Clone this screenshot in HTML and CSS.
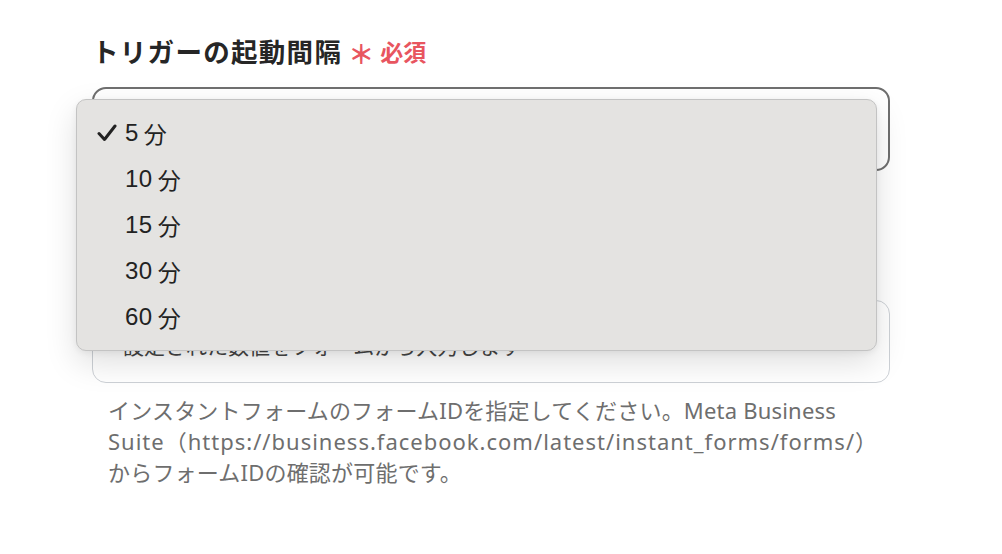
FILE: index.html
```html
<!DOCTYPE html>
<html lang="ja">
<head>
<meta charset="utf-8">
<link rel="stylesheet" href="styles.css">
</head>
<body>
<div class="page">
  <div class="label">トリガーの起動間隔<span class="req"><span class="ast">＊</span>必須</span></div>
  <div class="field">
    <div class="select"></div>
    <ul class="menu">
      <li class="item selected">
        <svg class="check" viewBox="0 0 20 18" width="20" height="18"><path d="M2 9.5 L7.5 15.5 L18 2" fill="none" stroke="#222" stroke-width="3" stroke-linecap="round" stroke-linejoin="round"/></svg>
        5<span class="unit">分</span>
      </li>
      <li class="item">10<span class="unit">分</span></li>
      <li class="item">15<span class="unit">分</span></li>
      <li class="item">30<span class="unit">分</span></li>
      <li class="item">60<span class="unit">分</span></li>
    </ul>
  </div>
  <div class="input"><span class="placeholder">設定された数値をフォームから入力します</span></div>
  <p class="help">インスタントフォームのフォームIDを指定してください。Meta Business<br><span class="wide">Suite（https://business.facebook.com/latest/instant_forms/forms/）</span><br>からフォームIDの確認が可能です。</p>
</div>
</body>
</html>
```

FILE: styles.css
```css
html, body {
  margin: 0;
  padding: 0;
  background: #ffffff;
}

body {
  font-family: "Liberation Sans", "Noto Sans CJK JP", sans-serif;
  color: #222222;
}

.page {
  width: 798px;
  padding: 35px 0 0 92px;
}

.label {
  font-family: "Noto Sans CJK JP", sans-serif;
  font-size: 26.5px;
  font-weight: 700;
  line-height: 32px;
  letter-spacing: 1.3px;
  color: #262626;
  margin-bottom: 20px;
  display: flex;
  align-items: center;
}

.req {
  font-size: 23px;
  font-weight: 700;
  color: #e8555f;
  margin-left: 6px;
  letter-spacing: 0;
  display: flex;
  align-items: center;
}

.ast {
  font-size: 26px;
  margin-right: 6px;
  position: relative;
  top: 2px;
}

.field {
  position: relative;
}

.select {
  box-sizing: border-box;
  height: 84px;
  border: 2px solid #6f6f6f;
  border-radius: 14px;
  background: #ffffff;
}

.menu {
  position: absolute;
  left: -16px;
  top: 12px;
  width: 801px;
  box-sizing: border-box;
  margin: 0;
  padding: 10px 0;
  list-style: none;
  background: #e4e3e1;
  border: 1px solid #c3c3c3;
  border-radius: 10px;
  box-shadow: 0 12px 32px rgba(0, 0, 0, 0.13), 0 2px 6px rgba(0, 0, 0, 0.06);
  z-index: 10;
}

.item {
  position: relative;
  height: 46px;
  display: flex;
  align-items: center;
  padding-left: 48px;
  font-family: "Liberation Sans", "Noto Sans CJK JP", sans-serif;
  font-size: 24px;
  line-height: 24px;
  letter-spacing: 0.5px;
  color: #222222;
}

.unit {
  font-family: "Noto Sans CJK JP", sans-serif;
  font-size: 23px;
  line-height: 24px;
  margin-left: 5px;
}

.check {
  position: absolute;
  left: 20px;
  top: 14px;
}

.input {
  box-sizing: border-box;
  margin-top: 129px;
  height: 83px;
  border: 1px solid #cdd1d6;
  border-radius: 14px;
  background: #ffffff;
  padding: 8px 0 0 30px;
  display: flex;
  align-items: center;
}

.placeholder {
  font-family: "Noto Sans CJK JP", sans-serif;
  font-size: 21px;
  line-height: 21px;
  color: #444444;
}

.help {
  margin: 12px 0 0 0;
  padding-left: 16px;
  font-family: "Noto Sans", "Noto Sans CJK JP", sans-serif;
  font-size: 22px;
  line-height: 31px;
  letter-spacing: 0.2px;
  color: #6e6e6e;
  white-space: nowrap;
}

.wide {
  letter-spacing: 1px;
}
```
